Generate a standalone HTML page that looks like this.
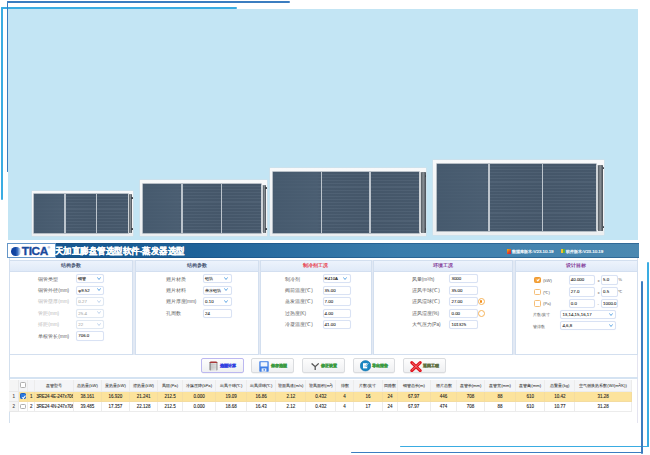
<!DOCTYPE html>
<html><head><meta charset="utf-8">
<style>
*{margin:0;padding:0;box-sizing:border-box}
html,body{width:650px;height:455px;overflow:hidden;background:#fff;font-family:"Liberation Sans",sans-serif}
.a{position:absolute}
.ln{position:absolute;border-radius:1px}
.dk{background:#3B7DC0}
.lt{background:#3AACE2}
#banner{position:absolute;left:8px;top:9px;width:630px;height:231px;background:#C3E5F4}
.coil{position:absolute;background:linear-gradient(180deg,#F8F9FA,#ECEFF1);box-shadow:0 0 0 0.4px #D8DEE4}
.pnl{position:absolute;box-shadow:0 0 0 0.6px #8C98A4;background:repeating-linear-gradient(180deg,#46586B 0px,#46586B 2px,#506275 2px,#506275 3.1px);}
.pnl::after{content:"";position:absolute;left:0;top:0;right:0;bottom:0;background:linear-gradient(90deg,rgba(70,90,110,.85) 0%,rgba(76,96,116,.7) 30%,rgba(70,90,110,.05) 34%,rgba(60,75,92,.12) 65%,rgba(70,85,100,.05) 100%)}
.dv{position:absolute;top:0;bottom:0;width:1.4px;background:#BCC4CC;z-index:2}
.hdr{position:absolute;background:linear-gradient(90deg,#50585F,#8A9197 45%,#6A7178 70%,#454C53);border-radius:0.4px}

.app{position:absolute;left:0;top:0}
.tb{position:absolute;left:7px;top:243.2px;width:631.8px;height:14.6px;background:linear-gradient(90deg,#14548E 0%,#1E6299 30%,#3A7DAC 62%,#4C89B1 100%);box-shadow:inset 0 1px 0 rgba(20,70,120,.45),inset 0 -1px 0 rgba(20,70,120,.45)}
.logo{position:absolute;left:7px;top:243.2px;width:49.2px;height:15px;background:#fff;border:1px solid #6496C8}
.ttl{position:absolute;left:55.4px;top:245.8px;-webkit-text-stroke:0.2px #fff;color:#fff;font-size:9px;line-height:11px;font-weight:bold;letter-spacing:0px;white-space:nowrap;transform:scaleX(0.94);transform-origin:0 0}
.ver{position:absolute;top:248.8px;color:#F4F8FC;font-size:4.4px;line-height:6px;white-space:nowrap;-webkit-text-stroke:0.2px currentColor}
.win{position:absolute;left:9px;top:258px;width:629px;height:165px;border-left:1px solid #D3E0EE;border-right:1px solid #E4E4F0}
.pn{position:absolute;top:260px;height:94.5px;border:1px solid #D3DFEF;background:#fff}
.ph{position:absolute;left:0;top:0;right:0;height:10.5px;background:linear-gradient(180deg,#EDF3FC,#E0EAF8);border-bottom:1px solid #D3DFF0;text-align:center;font-size:4.6px;line-height:10px;font-weight:normal;color:#3A4A6A;-webkit-text-stroke:0.15px currentColor}
.lb{position:absolute;font-size:4.7px;line-height:6px;color:#5E5E5E;white-space:nowrap}
.lb.dis{color:#B8B8B8}
.bx{position:absolute;height:9.3px;border:1px solid #D9E2F4;border-radius:2px;background:#fff;font-size:4.4px;letter-spacing:0px;line-height:7.3px;padding-left:1.1px;color:#111;white-space:nowrap;box-shadow:0 0 0.8px #E4ECF8;-webkit-text-stroke:0.05px currentColor}
.bx.dis{color:#AAA;border-color:#E0E8F2}
.bx .ar{position:absolute;right:2.2px;top:1.9px;width:4px;height:3px}
.bx.dis .ar path{stroke:#B5CCE8}
.btn{position:absolute;top:358.1px;height:15.4px;border:1px solid #DADCDF;border-radius:2px;background:linear-gradient(180deg,#FDFDFD,#EFF0F2);font-size:4.2px;line-height:13.4px;font-weight:bold;white-space:nowrap;-webkit-text-stroke:0.35px currentColor;box-shadow:0 0.4px 0.6px rgba(0,0,0,.08)}
.tbl{position:absolute;left:9.5px;top:379.5px;width:622px;border-collapse:collapse;table-layout:fixed;font-size:4.5px;color:#222;-webkit-text-stroke:0.08px currentColor}
.tbl td{border-right:1px solid #ECECEC;border-bottom:1px solid #ECECEC;text-align:center;white-space:nowrap;overflow:hidden;padding:0}
.tbl tr.h td{height:11.5px;background:#F4F5F7;color:#333;font-size:4.2px;-webkit-text-stroke:0.04px currentColor}
.tbl tr.r td{height:10.3px}
.tbl tr.y td{background:#FCE39C;border-color:#F4DCA0}
.tbl td.n{background:#F5F5F5 !important;color:#444;border-color:#E8E8E8 !important}
.cb{display:block;margin:0 auto;width:5.6px;height:5.6px;border:0.8px solid #AFAFAF;border-radius:1.3px;background:#fff}
.cb.on{background:#2E7BE0;border-color:#1E5FBF;position:relative}
.cb.on::after{content:"";position:absolute;left:1.2px;top:0.2px;width:1.4px;height:2.6px;border-right:0.8px solid #fff;border-bottom:0.8px solid #fff;transform:rotate(40deg)}

.bx .cj{font-size:4.4px;letter-spacing:0.1px}

.tbl tr.h .cb{display:block;margin:0 auto;width:5.6px;height:5.6px;border:0.8px solid #AFAFAF;border-radius:1.3px;background:#fff}
</style></head><body>
<div id="banner"></div>
<div class="ln lt" style="left:1px;top:7.2px;width:236px;height:1.9px"></div>
<div class="ln lt" style="left:1px;top:7.2px;width:1.9px;height:192.5px"></div>
<div class="ln dk" style="left:6.6px;top:1.1px;width:283.5px;height:1.9px"></div>
<div class="ln dk" style="left:6.6px;top:1.1px;width:1.9px;height:171px"></div>
<div class="coil" style="left:32px;top:191px;width:100.80px;height:44.60px"></div>
<div class="pnl" style="left:33.8px;top:193.6px;width:93.80px;height:39.70px"><div class="dv" style="left:30.50px"></div><div class="dv" style="left:62.10px"></div></div>
<div class="a" style="left:127.60px;top:194.10px;width:1.80px;height:38.70px;background:#CDD2D6"></div>
<div class="hdr" style="left:129.4px;top:194.10px;width:2.80px;height:39.20px"></div>
<div class="a" style="left:131.40px;top:196.60px;width:1.4px;height:2.2px;background:#3C4248;border-radius:0.5px"></div>
<div class="a" style="left:131.40px;top:228.30px;width:1.4px;height:2.2px;background:#3C4248;border-radius:0.5px"></div>
<div class="coil" style="left:140.4px;top:180.4px;width:126.20px;height:55.80px"></div>
<div class="pnl" style="left:142.7px;top:184px;width:118.00px;height:48.90px"><div class="dv" style="left:38.60px"></div><div class="dv" style="left:78.20px"></div></div>
<div class="a" style="left:260.70px;top:184.50px;width:2.10px;height:47.90px;background:#CDD2D6"></div>
<div class="hdr" style="left:262.8px;top:184.50px;width:3.40px;height:48.40px"></div>
<div class="a" style="left:265.40px;top:187.00px;width:1.4px;height:2.2px;background:#3C4248;border-radius:0.5px"></div>
<div class="a" style="left:265.40px;top:227.90px;width:1.4px;height:2.2px;background:#3C4248;border-radius:0.5px"></div>
<div class="coil" style="left:269.7px;top:168px;width:156.70px;height:67.80px"></div>
<div class="pnl" style="left:273.3px;top:171.5px;width:145.90px;height:61.00px"><div class="dv" style="left:47.50px"></div><div class="dv" style="left:96.20px"></div></div>
<div class="a" style="left:419.20px;top:172.00px;width:1.80px;height:60.00px;background:#CDD2D6"></div>
<div class="hdr" style="left:421px;top:172.00px;width:4.60px;height:60.50px"></div>
<div class="a" style="left:424.80px;top:174.50px;width:1.4px;height:2.2px;background:#3C4248;border-radius:0.5px"></div>
<div class="a" style="left:424.80px;top:227.50px;width:1.4px;height:2.2px;background:#3C4248;border-radius:0.5px"></div>
<div class="coil" style="left:433px;top:160px;width:171.00px;height:74.60px"></div>
<div class="pnl" style="left:437px;top:164px;width:159.00px;height:66.60px"><div class="dv" style="left:51.30px"></div><div class="dv" style="left:104.80px"></div></div>
<div class="a" style="left:596.00px;top:164.50px;width:2.20px;height:65.60px;background:#CDD2D6"></div>
<div class="hdr" style="left:598.2px;top:164.50px;width:5.20px;height:66.10px"></div>
<div class="a" style="left:602.60px;top:167.00px;width:1.4px;height:2.2px;background:#3C4248;border-radius:0.5px"></div>
<div class="a" style="left:602.60px;top:225.60px;width:1.4px;height:2.2px;background:#3C4248;border-radius:0.5px"></div>
<div class="win"></div>
<div class="tb"></div>
<div class="logo"></div>
<div class="a" style="left:11.3px;top:246.5px;width:9.8px;height:9.8px;border-radius:50%;background:linear-gradient(90deg,#0E3E9C 0%,#1448A4 45%,#3C6EBE 65%,#9CBCE6 85%,#EEF4FC 100%)"></div>
<div class="a" style="left:21.8px;top:245.3px;font-size:11.8px;line-height:13px;font-weight:bold;color:#1A4A9C;letter-spacing:-0.35px;-webkit-text-stroke:0.35px #1A4A9C">TICA</div>
<div class="a" style="left:47.4px;top:245.8px;font-size:3.6px;line-height:4px;color:#1A4A9C">&reg;</div>
<div class="ttl">天加直膨盘管选型软件-蒸发器选型</div>
<div class="a" style="left:507px;top:248.5px;width:4px;height:5px;background:linear-gradient(135deg,#F5C400,#E0402A 60%,#C02060)"></div>
<div class="ver" style="left:512.3px">数据库版本:V23.10.19</div>
<div class="a" style="left:560.5px;top:248.8px;width:4px;height:4.5px;background:linear-gradient(90deg,#F2C230 50%,#5FB040 50%)"></div>
<div class="ver" style="left:566px">软件版本:V23.10.19</div>
<div class="a" style="left:9px;top:260px;width:629px;height:94.5px;background:#E2E9F4"></div>
<div class="pn" style="left:9px;width:124px"><div class="ph" style="color:#3A4A6A">结构参数</div></div>
<div class="pn" style="left:134.5px;width:124.1px"><div class="ph" style="color:#3A4A6A">结构参数</div></div>
<div class="pn" style="left:260.2px;width:111.4px"><div class="ph" style="color:#E8303A">制冷剂工况</div></div>
<div class="pn" style="left:373.2px;width:139.5px"><div class="ph" style="color:#7A2A90">环境工况</div></div>
<div class="pn" style="left:514.5px;width:123.3px"><div class="ph" style="color:#7A2A90">设计目标</div></div>
<div class="lb" style="left:38.2px;top:276.5px">铜管类型</div>
<div class="bx" style="left:76.2px;top:274.09999999999997px;width:27.6px"><span class="cj">铜管</span><svg class="ar" viewBox="0 0 4 3"><path d="M0.4 0.4 L2 2.5 L3.6 0.4" stroke="#4A9BE0" stroke-width="0.85" fill="none"/></svg></div>
<div class="lb" style="left:38.2px;top:287.90000000000003px">铜管外径(mm)</div>
<div class="bx" style="left:76.2px;top:285.5px;width:27.6px">φ9.52<svg class="ar" viewBox="0 0 4 3"><path d="M0.4 0.4 L2 2.5 L3.6 0.4" stroke="#4A9BE0" stroke-width="0.85" fill="none"/></svg></div>
<div class="lb dis" style="left:38.2px;top:299.40000000000003px">铜管壁厚(mm)</div>
<div class="bx dis" style="left:76.2px;top:297.0px;width:27.6px">0.27<svg class="ar" viewBox="0 0 4 3"><path d="M0.4 0.4 L2 2.5 L3.6 0.4" stroke="#4A9BE0" stroke-width="0.85" fill="none"/></svg></div>
<div class="lb dis" style="left:38.2px;top:310.90000000000003px">管距(mm)</div>
<div class="bx dis" style="left:76.2px;top:308.5px;width:27.6px">25.4<svg class="ar" viewBox="0 0 4 3"><path d="M0.4 0.4 L2 2.5 L3.6 0.4" stroke="#4A9BE0" stroke-width="0.85" fill="none"/></svg></div>
<div class="lb dis" style="left:38.2px;top:322.3px">排距(mm)</div>
<div class="bx dis" style="left:76.2px;top:319.9px;width:27.6px">22<svg class="ar" viewBox="0 0 4 3"><path d="M0.4 0.4 L2 2.5 L3.6 0.4" stroke="#4A9BE0" stroke-width="0.85" fill="none"/></svg></div>
<div class="lb" style="left:38.2px;top:333.8px">单根管长(mm)</div>
<div class="bx" style="left:76.2px;top:331.4px;width:27.6px">706.0</div>
<div class="lb" style="left:165.5px;top:276.5px">翅片材质</div>
<div class="bx" style="left:203px;top:274.09999999999997px;width:28.6px"><span class="cj">铝箔</span><svg class="ar" viewBox="0 0 4 3"><path d="M0.4 0.4 L2 2.5 L3.6 0.4" stroke="#4A9BE0" stroke-width="0.85" fill="none"/></svg></div>
<div class="lb" style="left:165.5px;top:287.90000000000003px">翅片材料</div>
<div class="bx" style="left:203px;top:285.5px;width:28.6px"><span class="cj">亲水铝箔</span><svg class="ar" viewBox="0 0 4 3"><path d="M0.4 0.4 L2 2.5 L3.6 0.4" stroke="#4A9BE0" stroke-width="0.85" fill="none"/></svg></div>
<div class="lb" style="left:165.5px;top:299.40000000000003px">翅片厚度(mm)</div>
<div class="bx" style="left:203px;top:297.0px;width:28.6px">0.10<svg class="ar" viewBox="0 0 4 3"><path d="M0.4 0.4 L2 2.5 L3.6 0.4" stroke="#4A9BE0" stroke-width="0.85" fill="none"/></svg></div>
<div class="lb" style="left:165.5px;top:310.90000000000003px">孔周数</div>
<div class="bx" style="left:203px;top:308.5px;width:28.6px">24</div>
<div class="lb" style="left:284.8px;top:276.5px">制冷剂</div>
<div class="bx" style="left:322.5px;top:274.09999999999997px;width:28px">R410A<svg class="ar" viewBox="0 0 4 3"><path d="M0.4 0.4 L2 2.5 L3.6 0.4" stroke="#4A9BE0" stroke-width="0.85" fill="none"/></svg></div>
<div class="lb" style="left:284.8px;top:287.90000000000003px">阀前温度(℃)</div>
<div class="bx" style="left:322.5px;top:285.5px;width:28px">35.00</div>
<div class="lb" style="left:284.8px;top:299.40000000000003px">蒸发温度(℃)</div>
<div class="bx" style="left:322.5px;top:297.0px;width:28px">7.00</div>
<div class="lb" style="left:284.8px;top:310.90000000000003px">过热度(K)</div>
<div class="bx" style="left:322.5px;top:308.5px;width:28px">4.00</div>
<div class="lb" style="left:284.8px;top:322.3px">冷凝温度(℃)</div>
<div class="bx" style="left:322.5px;top:319.9px;width:28px">41.00</div>
<div class="lb" style="left:411.8px;top:276.5px">风量(m³/h)</div>
<div class="bx" style="left:449.4px;top:274.09999999999997px;width:28.2px">3000</div>
<div class="lb" style="left:411.8px;top:287.90000000000003px">进风干球(℃)</div>
<div class="bx" style="left:449.4px;top:285.5px;width:28.2px">35.00</div>
<div class="lb" style="left:411.8px;top:299.40000000000003px">进风湿球(℃)</div>
<div class="bx" style="left:449.4px;top:297.0px;width:28.2px">27.00</div>
<div class="lb" style="left:411.8px;top:310.90000000000003px">进风湿度(%)</div>
<div class="bx" style="left:449.4px;top:308.5px;width:28.2px">0.00</div>
<div class="lb" style="left:411.8px;top:322.3px">大气压力(Pa)</div>
<div class="bx" style="left:449.4px;top:319.9px;width:28.2px">101325</div>
<div class="a" style="left:478px;top:298.1px;width:7px;height:7px;border:1.2px solid #F6B45A;border-radius:50%;background:#fff"><div class="a" style="left:1.1px;top:1.1px;width:2.4px;height:2.4px;border-radius:50%;background:#F28C18"></div></div>
<div class="a" style="left:478px;top:309.6px;width:7px;height:7px;border:1.2px solid #F6B45A;border-radius:50%;background:#fff"></div>
<div class="a" style="left:534.2px;top:276.7px;width:6.8px;height:6.8px;border-radius:1.4px;background:#F6A23A;border:0.8px solid #EE9A30"><div class="a" style="left:1.7px;top:0.4px;width:1.8px;height:3.4px;border-right:0.9px solid #fff;border-bottom:0.9px solid #fff;transform:rotate(40deg)"></div></div>
<div class="lb" style="left:543px;top:277.8px;font-size:4.2px">(kW)</div>
<div class="bx" style="left:568.7px;top:275.4px;width:26.4px">40.000</div>
<div class="lb" style="left:597.6px;top:277.8px;font-size:4.2px">±</div>
<div class="bx" style="left:601px;top:275.4px;width:16.5px">5.0</div>
<div class="lb" style="left:618.3px;top:277.2px;font-size:4.2px">%</div>
<div class="a" style="left:534.2px;top:288.59999999999997px;width:6.8px;height:6.8px;border-radius:1.4px;background:#fff;border:1.1px solid #F6BE76"></div>
<div class="lb" style="left:543px;top:289.7px;font-size:4.2px">(℃)</div>
<div class="bx" style="left:568.7px;top:287.29999999999995px;width:26.4px">27.0</div>
<div class="lb" style="left:597.6px;top:289.7px;font-size:4.2px">±</div>
<div class="bx" style="left:601px;top:287.29999999999995px;width:16.5px">0.5</div>
<div class="lb" style="left:618.3px;top:289.09999999999997px;font-size:4.2px">℃</div>
<div class="a" style="left:534.2px;top:300.2px;width:6.8px;height:6.8px;border-radius:1.4px;background:#fff;border:1.1px solid #F6BE76"></div>
<div class="lb" style="left:543px;top:301.3px;font-size:4.2px">(Pa)</div>
<div class="bx" style="left:568.7px;top:298.9px;width:26.4px">0.0</div>
<div class="lb" style="left:597.6px;top:301.3px;font-size:4.2px">-</div>
<div class="bx" style="left:601px;top:298.9px;width:16.5px">1000.0</div>
<div class="lb" style="left:533.3px;top:312.2px;font-size:4.2px">片数/英寸</div>
<div class="bx" style="left:560.3px;top:309.79999999999995px;width:56.2px">13,14,15,16,17<svg class="ar" viewBox="0 0 4 3"><path d="M0.4 0.4 L2 2.5 L3.6 0.4" stroke="#4A9BE0" stroke-width="0.85" fill="none"/></svg></div>
<div class="lb" style="left:533.3px;top:323.6px;font-size:4.2px">管排数</div>
<div class="bx" style="left:560.3px;top:321.2px;width:56.2px">4,6,8<svg class="ar" viewBox="0 0 4 3"><path d="M0.4 0.4 L2 2.5 L3.6 0.4" stroke="#4A9BE0" stroke-width="0.85" fill="none"/></svg></div>
<div class="a" style="left:9.5px;top:377px;width:628px;height:1.6px;background:#D5E3F2"></div>
<div class="btn" style="left:200.7px;width:43.1px;border-color:#BCB8F0;color:#3040E0"><svg class="a" style="left:7.6px;top:1.8px" width="9" height="10" viewBox="0 0 9 10"><defs><linearGradient id="cg" x1="0" x2="1"><stop offset="0" stop-color="#5A5A5A"/><stop offset="0.22" stop-color="#CFCFCF"/><stop offset="0.78" stop-color="#E2E2E2"/><stop offset="1" stop-color="#7A7A7A"/></linearGradient></defs><rect x="0.6" y="0.8" width="7.8" height="8.8" rx="0.8" fill="url(#cg)"/><g stroke="#B0B0B0" stroke-width="0.35"><path d="M2 3.6H7M2 5.2H7M2 6.8H7"/></g><path d="M0.6 2 Q0.6 0.5 2 0.5 H7 Q8.4 0.5 8.4 2 Z" fill="#A83838"/></svg><span class="a" style="left:18.8px;top:0">选型计算</span></div>
<div class="btn" style="left:251.2px;width:42.6px;color:#3A9A40"><svg class="a" style="left:6.6px;top:1.6px" width="10" height="11" viewBox="0 0 10 11"><rect x="0.3" y="0.3" width="9.4" height="10.4" rx="0.6" fill="#3F7FE6"/><rect x="1.6" y="1.2" width="6.8" height="4.3" fill="#F2F6FC"/><rect x="2.6" y="7.4" width="4.8" height="3.3" fill="#E8EEF8"/><rect x="4.6" y="8" width="1.2" height="1.8" fill="#3F7FE6"/></svg><span class="a" style="left:18.8px;top:0">保存选型</span></div>
<div class="btn" style="left:302px;width:42.6px;color:#3A9A40"><svg class="a" style="left:7.8px;top:3.6px" width="8.4" height="7.4" viewBox="0 0 8.4 7.4"><path d="M0.6 0.4 L4.2 3.7 L7.8 0.4 M4.2 3.7 L4.2 7.2" stroke="#555" stroke-width="1.3" fill="none"/></svg><span class="a" style="left:18px;top:0">修正设置</span></div>
<div class="btn" style="left:352.7px;width:42.5px;color:#3A9A40"><svg class="a" style="left:6.6px;top:1px" width="11" height="11.5" viewBox="0 0 11 11.5"><circle cx="5.5" cy="5.75" r="5.3" fill="#1A86C2" stroke="#0F6FA8" stroke-width="0.5"/><rect x="3" y="3.2" width="4.2" height="5.2" fill="#fff"/><path d="M3.8 5.4 H5.6 M3.8 6.6 H5.2" stroke="#7FBDE0" stroke-width="0.4"/><path d="M5.8 6.6 L8.4 3" stroke="#1A86C2" stroke-width="1.3"/><path d="M5.9 6.4 L8.3 3.1" stroke="#fff" stroke-width="0.7"/></svg><span class="a" style="left:18.1px;top:0">导出报告</span></div>
<div class="btn" style="left:403px;width:42.5px;color:#607040"><svg class="a" style="left:6.2px;top:1.5px" width="12" height="11" viewBox="0 0 12 11"><path d="M1.8 1.6 L10.2 9.6 M10.2 1.6 L1.8 9.6" stroke="#E0101A" stroke-width="3" stroke-linecap="round"/><path d="M2.2 2 L10 9.2 M9.8 2 L2 9.2" stroke="#F8B0B0" stroke-width="0.6" stroke-linecap="round"/></svg><span class="a" style="left:18.5px;top:0">返回工程</span></div>
<table class="tbl" style="left:9.3px;width:622.2px"><colgroup><col style="width:9.2px"><col style="width:9.5px"><col style="width:6.5px"><col style="width:39.1px"><col style="width:27.7px"><col style="width:28.2px"><col style="width:28.3px"><col style="width:24.7px"><col style="width:33.2px"><col style="width:30.9px"><col style="width:29.1px"><col style="width:30.3px"><col style="width:30px"><col style="width:17.2px"><col style="width:29.6px"><col style="width:14.4px"><col style="width:33.3px"><col style="width:26.3px"><col style="width:27.8px"><col style="width:31.1px"><col style="width:29.3px"><col style="width:30px"><col style="width:56.5px"></colgroup><tr class="h"><td class="n"></td><td><i class="cb"></i></td><td></td><td>盘管型号</td><td>总热量(kW)</td><td>显热量(kW)</td><td>潜热量(kW)</td><td>风阻(Pa)</td><td>冷媒压降(kPa)</td><td>出风干球(℃)</td><td>出风湿球(℃)</td><td>迎面风速(m/s)</td><td>迎风面积(m²)</td><td>排数</td><td>片数/英寸</td><td>回路数</td><td>铜管总长(m)</td><td>翅片总数</td><td>盘管长(mm)</td><td>盘管宽(mm)</td><td>盘管高(mm)</td><td>总重量(kg)</td><td>空气侧换热系数(W/(m²/K))</td></tr><tr class="r y"><td class="n">1</td><td><i class="cb on"></i></td><td>1</td><td style="text-align:left;padding-left:1.2px;font-size:4.6px;letter-spacing:-0.15px">3RE24 4E-247x706</td><td>38.161</td><td>16.920</td><td>21.241</td><td>212.5</td><td>0.000</td><td>19.09</td><td>16.86</td><td>2.12</td><td>0.432</td><td>4</td><td>16</td><td>24</td><td>67.97</td><td>446</td><td>708</td><td>88</td><td>610</td><td>10.42</td><td>31.28</td></tr><tr class="r"><td class="n">2</td><td><i class="cb"></i></td><td>2</td><td style="text-align:left;padding-left:1.2px;font-size:4.6px;letter-spacing:-0.15px">3RE24 4N-247x706</td><td>39.485</td><td>17.357</td><td>22.128</td><td>212.5</td><td>0.000</td><td>18.68</td><td>16.43</td><td>2.12</td><td>0.432</td><td>4</td><td>17</td><td>24</td><td>67.97</td><td>474</td><td>708</td><td>88</td><td>610</td><td>10.77</td><td>31.28</td></tr></table>
<div class="ln lt" style="left:647px;top:262px;width:1.9px;height:185.3px"></div>
<div class="ln lt" style="left:400px;top:445.5px;width:249px;height:1.9px"></div>
<div class="ln dk" style="left:641px;top:281px;width:1.9px;height:172.5px"></div>
<div class="ln dk" style="left:351px;top:451.5px;width:292px;height:1.9px"></div>
</body></html>
